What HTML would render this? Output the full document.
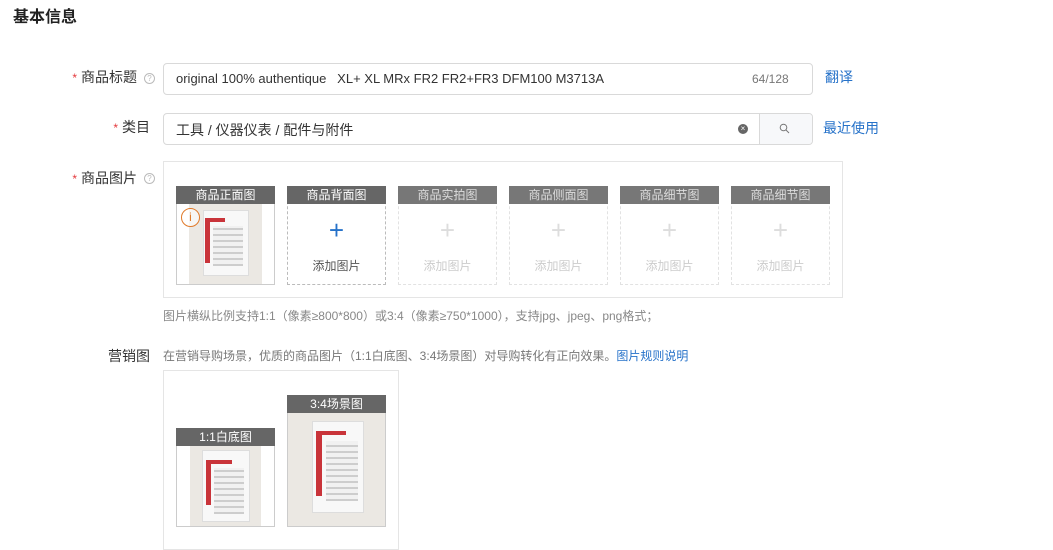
<!DOCTYPE html><html><head><meta charset="utf-8"><style>
*{box-sizing:border-box;margin:0;padding:0}
body{width:1053px;height:538px;overflow:hidden;background:#fff;font-family:"Liberation Sans","Noto Sans CJK SC",sans-serif;color:#333;position:relative}
.a{position:absolute}
.lbl{font-size:14px;color:#333;text-align:right}
.lbl b{color:#e4393c;font-weight:normal;font-size:12px;margin-right:4px}
.q{width:11px;height:11px;border:1px solid #bbb;border-radius:50%;font-size:8px;color:#bbb;text-align:center;line-height:9px}
.inp{border:1px solid #d9d9d9;border-radius:4px;background:#fff}
.tile{position:absolute;width:99px;height:99px;border:1px dashed #ccc}
.tile .h{position:absolute;left:-1px;top:-1px;width:99px;height:18px;background:#666;color:#fff;font-size:12px;text-align:center;line-height:18px}
.tile.dis .h{background:#777;color:#ddd}
.tile .p{position:absolute;left:0;width:97px;top:28px;text-align:center;font-size:26px;color:#ddd;line-height:30px}
.tile .t{position:absolute;left:0;width:97px;top:70px;text-align:center;font-size:12px;color:#ccc}
.photo{position:absolute;background:#ebe8e3;overflow:hidden}
.photo i{position:absolute;background:#f8f8f8;border:1px solid #ddd}
.photo u{position:absolute;background:#c9343a}
.photo s{position:absolute;background:repeating-linear-gradient(0deg,#bbb 0 2px,#eee 2px 6px);opacity:.7}
</style></head><body>
<div class="a" style="left:13px;top:3px;font-size:16px;font-weight:bold;color:#222">基本信息</div>

<div class="a lbl" style="left:60px;top:67px;width:77px"><b>*</b>商品标题</div>
<div class="a q" style="left:144px;top:73px">?</div>
<div class="a inp" style="left:163px;top:63px;width:650px;height:32px"></div>
<div class="a" style="left:176px;top:71px;font-size:13px;color:#333;white-space:pre">original 100% authentique   XL+ XL MRx FR2 FR2+FR3 DFM100 M3713A</div>
<div class="a" style="left:752px;top:72px;font-size:12px;color:#777">64/128</div>
<div class="a" style="left:825px;top:67px;font-size:14px;color:#2672c9">翻译</div>

<div class="a lbl" style="left:60px;top:117px;width:90px"><b>*</b>类目</div>
<div class="a inp" style="left:163px;top:113px;width:650px;height:32px"></div>
<div class="a" style="left:759px;top:114px;width:53px;height:30px;background:#f7f8fa;border-left:1px solid #d9d9d9;border-radius:0 4px 4px 0"></div>
<svg class="a" style="left:779px;top:123px" width="11" height="11"><circle cx="4.5" cy="4.5" r="3.3" fill="none" stroke="#777" stroke-width="1"/><path d="M7 7l3 3" stroke="#777" stroke-width="1"/></svg>
<div class="a" style="left:738px;top:124px;width:10px;height:10px;border-radius:50%;background:#666;color:#fff;font-size:8px;line-height:10px;text-align:center">×</div>
<div class="a" style="left:176px;top:120px;font-size:14px;color:#333">工具 / 仪器仪表 / 配件与附件</div>
<div class="a" style="left:823px;top:118px;font-size:14px;color:#2672c9">最近使用</div>

<div class="a lbl" style="left:60px;top:168px;width:77px"><b>*</b>商品图片</div>
<div class="a q" style="left:144px;top:173px">?</div>
<div class="a" style="left:163px;top:161px;width:680px;height:137px;border:1px solid #e5e5e5"></div>

<div class="tile" style="left:176px;top:186px;border:1px solid #ccc">
 <div class="photo" style="left:12px;top:17px;width:73px;height:80px"><i style="left:14px;top:6px;width:46px;height:66px"></i><u style="left:16px;top:14px;width:5px;height:45px"></u><u style="left:16px;top:14px;width:20px;height:4px"></u><s style="left:24px;top:22px;width:30px;height:40px"></s></div>
 <div class="h" style="background:#666">商品正面图</div>
 <div class="a" style="left:4px;top:21px;width:19px;height:19px;border:1.5px solid #e07a2a;border-radius:50%;color:#e07a2a;font-size:12px;text-align:center;line-height:16px;background:rgba(255,255,255,.6)">i</div>
</div>
<div class="tile" style="left:287px;top:186px;border-color:#bbb"><div class="h">商品背面图</div><div class="p" style="color:#2672c9">+</div><div class="t" style="color:#555">添加图片</div></div>
<div class="tile dis" style="left:398px;top:186px;border-color:#e2e2e2"><div class="h">商品实拍图</div><div class="p">+</div><div class="t">添加图片</div></div>
<div class="tile dis" style="left:509px;top:186px;border-color:#e2e2e2"><div class="h">商品侧面图</div><div class="p">+</div><div class="t">添加图片</div></div>
<div class="tile dis" style="left:620px;top:186px;border-color:#e2e2e2"><div class="h">商品细节图</div><div class="p">+</div><div class="t">添加图片</div></div>
<div class="tile dis" style="left:731px;top:186px;border-color:#e2e2e2"><div class="h">商品细节图</div><div class="p">+</div><div class="t">添加图片</div></div>

<div class="a" style="left:163px;top:307px;font-size:12px;color:#888">图片横纵比例支持1:1（像素≥800*800）或3:4（像素≥750*1000），支持jpg、jpeg、png格式；</div>

<div class="a lbl" style="left:60px;top:346px;width:90px">营销图</div>
<div class="a" style="left:163px;top:347px;font-size:12px;color:#777">在营销导购场景，优质的商品图片（1:1白底图、3:4场景图）对导购转化有正向效果。<span style="color:#2672c9">图片规则说明</span></div>
<div class="a" style="left:163px;top:370px;width:236px;height:180px;border:1px solid #e5e5e5"></div>

<div class="tile" style="left:176px;top:428px;border:1px solid #ccc">
 <div class="photo" style="left:13px;top:17px;width:71px;height:80px"><i style="left:12px;top:4px;width:48px;height:72px"></i><u style="left:16px;top:14px;width:5px;height:45px"></u><u style="left:16px;top:14px;width:26px;height:4px"></u><s style="left:24px;top:22px;width:30px;height:46px"></s></div>
 <div class="h">1:1白底图</div>
</div>
<div class="tile" style="left:287px;top:395px;width:99px;height:132px;border:1px solid #ccc">
 <div class="photo" style="left:0;top:17px;width:97px;height:113px"><i style="left:24px;top:8px;width:52px;height:92px"></i><u style="left:28px;top:18px;width:6px;height:65px"></u><u style="left:28px;top:18px;width:30px;height:4px"></u><s style="left:38px;top:28px;width:32px;height:60px"></s></div>
 <div class="h">3:4场景图</div>
</div>
</body></html>
